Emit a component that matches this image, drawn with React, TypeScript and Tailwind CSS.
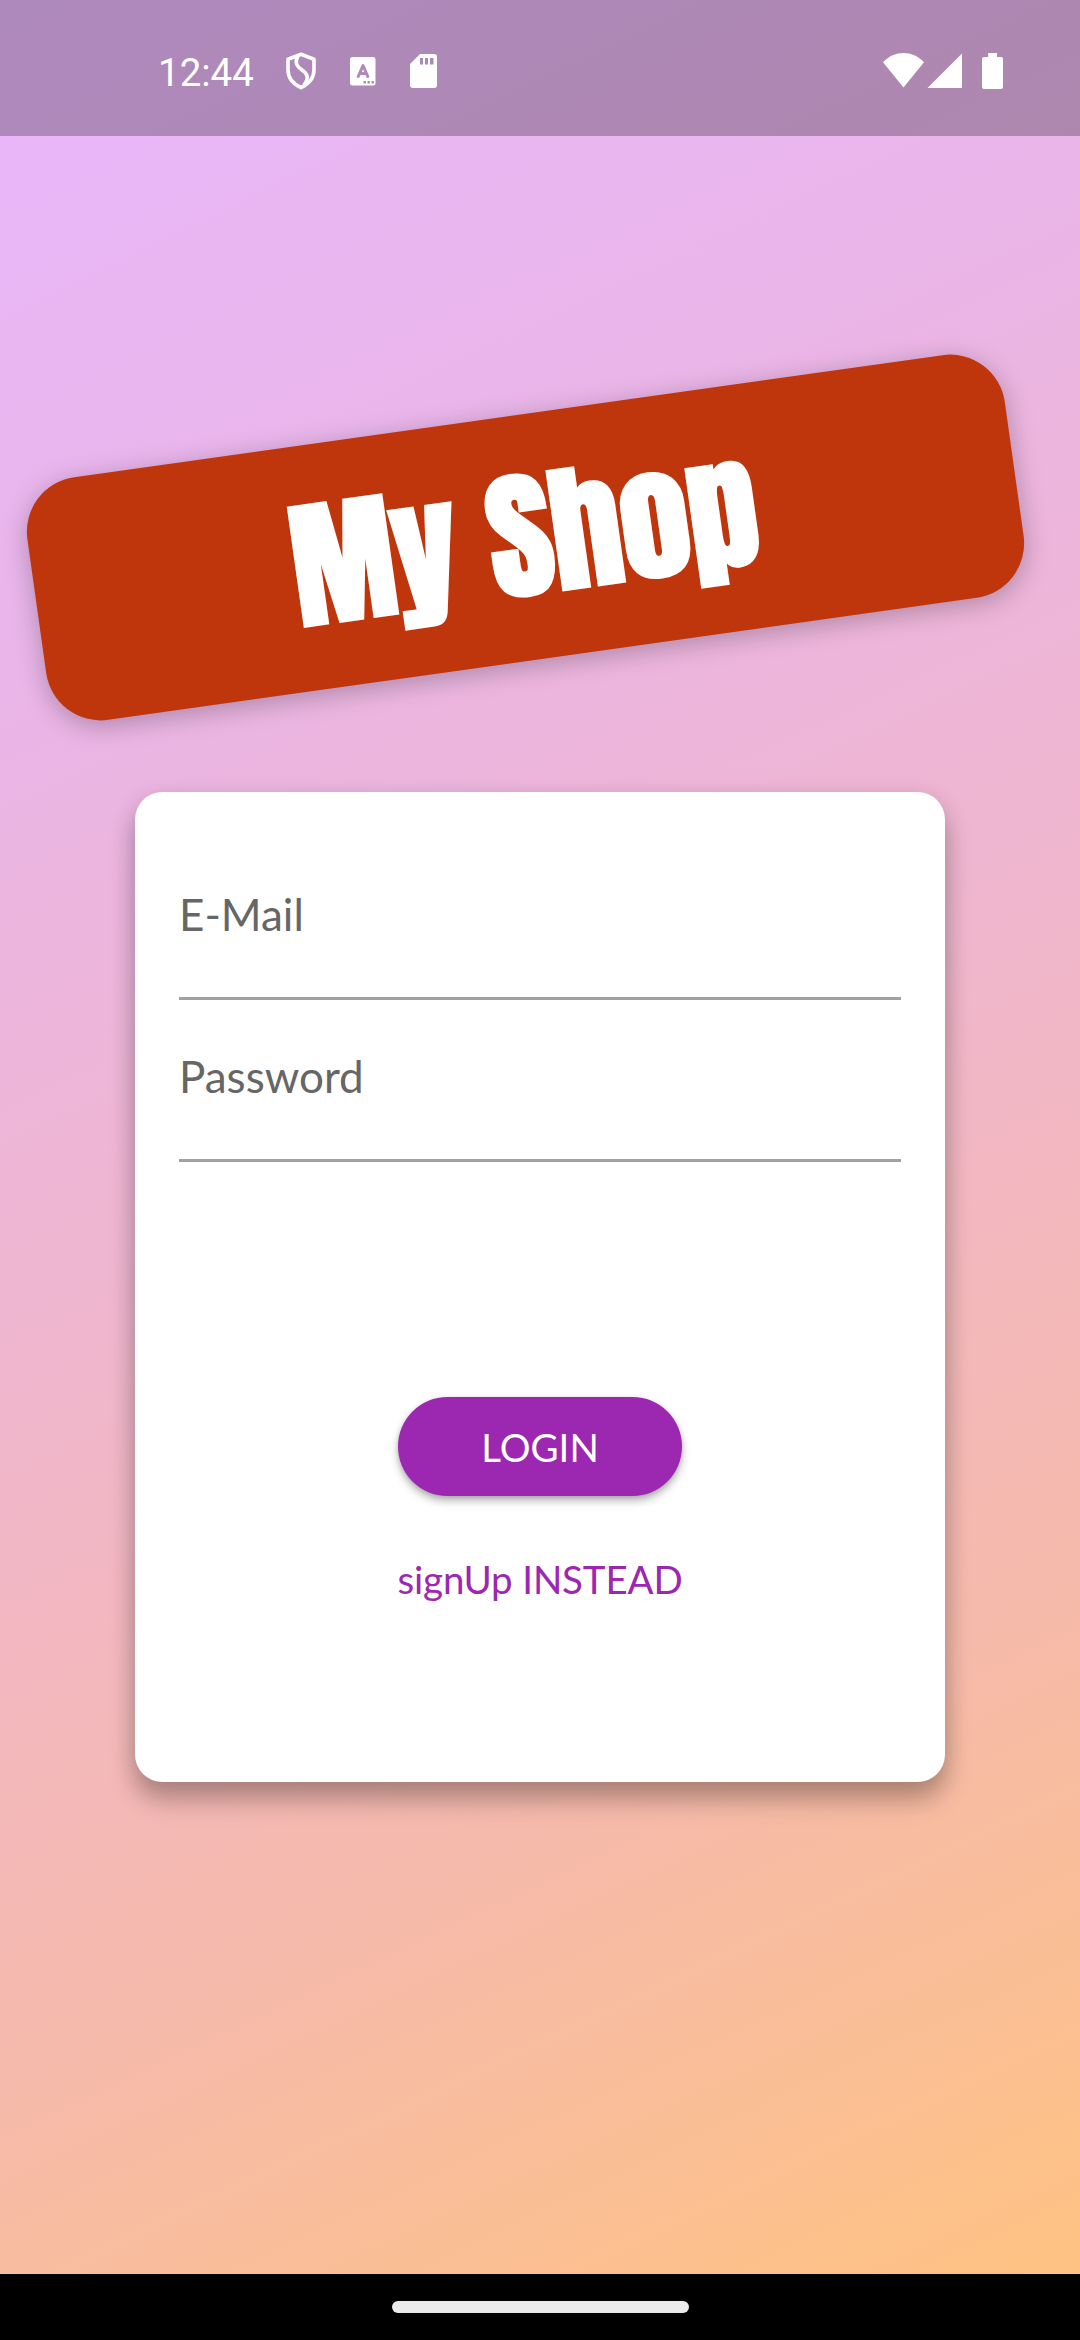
import type { ReactNode } from "react";

function ShieldIcon() {
  return (
    <svg viewBox="0 0 32 38" className="h-[38px] w-8" fill="none" stroke="#fff" strokeWidth="3.6" strokeLinejoin="round">
      <path d="M16 2.3 L29 7.2 V18 C29 26 23.5 32 16 35.6 C8.500 32 3 26 3 18 V7.200 Z" />
      <path d="M13 4 C9.500 10 11 14 17 18 C23 22 24 26 19 33" />
    </svg>
  );
}

function LetterIcon() {
  return (
    <svg viewBox="0 0 26 29" className="h-[29px] w-[26px]">
      <rect width="25.500" height="28.500" rx="2.500" fill="#fff" />
      <path d="M8.200 19.500 L13 8.500 L17.800 19.500 M9.800 16.500 H16.200" fill="none" stroke="#af89b8" strokeWidth="3" strokeLinejoin="round" strokeLinecap="round" />
      <path d="M13.500 24 h2.400 v2.400 h-2.400z M17.500 24 h2.400 v2.400 h-2.400z M21.500 24 h2.400 v2.400 h-2.400z" fill="#af89b8" />
    </svg>
  );
}

function SdCardIcon() {
  return (
    <svg viewBox="0 0 27 34" className="h-[34px] w-[27px]">
      <path fillRule="evenodd" fill="#fff" d="M10 0 H24 Q27 0 27 3 V31 Q27 34 24 34 H3 Q0 34 0 31 V10 Z M10 4 V10.500 H13 V4 Z M15 4 V10.500 H18 V4 Z M20 4 V10.500 H23.500 V4 Z" />
    </svg>
  );
}

function StatusBar() {
  return (
    <header className="flex h-[136px] items-start bg-black/25 text-white">
      <span className="mt-[50px] ml-[158px] w-[100px] whitespace-nowrap font-['Roboto'] text-[38.5px] leading-[46px]">12:44</span>
      <div className="mt-[52px] ml-[27px]"><ShieldIcon /></div>
      <div className="mt-[57px] ml-[32.5px]"><LetterIcon /></div>
      <div className="mt-[54px] ml-[34.5px]"><SdCardIcon /></div>
      <svg viewBox="0 0 41 35" className="mt-[53px] ml-auto h-[35px] w-[41px]">
        <path d="M0 9.300 C12 -3 29 -3 41 9.300 L20.500 34.500 Z" fill="#fff" />
      </svg>
      <svg viewBox="0 0 35 35" className="mt-[53px] ml-[3px] h-[35px] w-[35px]">
        <path d="M0.500 35 H35 V0.500 Z" fill="#fff" />
      </svg>
      <svg viewBox="0 0 21 36" className="mt-[53px] mr-[77px] ml-5 h-9 w-[21px]">
        <path d="M6.200 0 H15 V4 H19 Q21 4 21 6 V34 Q21 36 19 36 H2 Q0 36 0 34 V6 Q0 4 2 4 H6.200 Z" fill="#fff" />
      </svg>
    </header>
  );
}

function Field({ children }: { children: ReactNode }) {
  return (
    <div className="flex h-[162px] items-start border-b-[3px] border-[#a0a0a0] pt-[50px] text-[44px] leading-[53px] text-[#666]">
      {children}
    </div>
  );
}

export default function App() {
  return (
    <div className="flex h-[2340px] w-[1080px] flex-col overflow-hidden bg-black font-['Lato',sans-serif]">
      <main className="flex h-[2274px] flex-col bg-[linear-gradient(154.58deg,#e8b7fc_0%,#eab5e8_25%,#f0b6cd_50%,#f6baab_75%,#fec282_100%)]">
        <StatusBar />
        <h1 className="mt-[278.500px] ml-[31.500px] flex h-[245px] w-[987px] shrink-0 -rotate-[8deg] items-center justify-center rounded-[55px] bg-[#bf360c] pr-[2px] pb-1 font-['Anton'] text-[137.5px] leading-none font-bold text-white shadow-[0_5.5px_26px_rgba(0,0,0,0.26)]">
          My Shop
        </h1>
        <section className="mt-[132.500px] ml-[135px] flex h-[990px] w-[810px] shrink-0 flex-col rounded-[27.5px] bg-white px-11 pt-[46px] shadow-[0_18px_26px_0_rgba(0,0,0,0.26),0_4px_24px_0_rgba(0,0,0,0.1)]">
          <Field>E-Mail</Field>
          <Field>Password</Field>
          <div className="mt-[235px] flex flex-col items-center">
            <button className="h-[99px] w-[284px] rounded-full bg-[#9c27b0] pt-[2px] text-[38.5px] text-white shadow-[0_5px_8px_rgba(0,0,0,0.28),0_1px_4px_rgba(0,0,0,0.12)]">LOGIN</button>
            <button className="mt-[60px] text-[38.5px] leading-[46px] tracking-[-0.15px] whitespace-nowrap text-[#9c27b0]">signUp INSTEAD</button>
          </div>
        </section>
      </main>
      <footer className="flex h-[66px] items-start justify-center pt-[27px]">
        <div className="h-3 w-[297px] rounded-full bg-[#ebebeb]" />
      </footer>
    </div>
  );
}
